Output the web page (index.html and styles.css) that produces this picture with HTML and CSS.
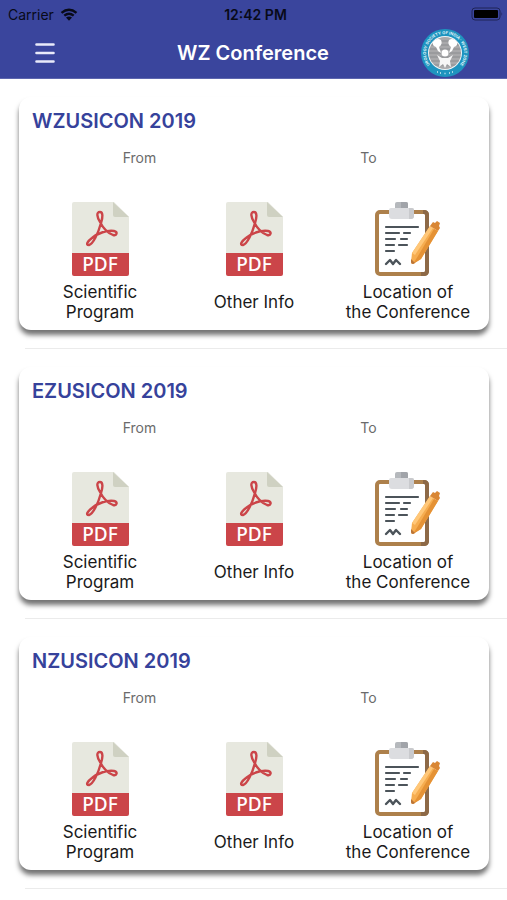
FILE: index.html
```html
<!DOCTYPE html>
<html lang="en">
<head>
<meta charset="utf-8">
<meta name="viewport" content="width=device-width, initial-scale=1">
<title>WZ Conference</title>
<link rel="stylesheet" href="styles.css">
</head>
<body>
<svg class="sprite" aria-hidden="true">
  <symbol id="pdf" viewBox="0 0 57 74">
    <path d="M2 0H42L57 15V60H0V2Q0 0 2 0Z" fill="#e7e8df"/>
    <path d="M41 0L57 15H43Q41 15 41 13Z" fill="#cfd1c2"/>
    <path d="M0 51H57V72Q57 74 55 74H2Q0 74 0 72Z" fill="#cb4549"/>
    <path d="M28 10C24 10 25 15 28 20C31 26 36 31 41 33C45 34 46 30 42 29C35 28 26 31 20 36C16 39 13 43 17 43C21 42 26 32 29 21C31 15 31 10 28 10Z" fill="none" stroke="#cb4549" stroke-width="2.4" stroke-linejoin="round"/>
  </symbol>
  <symbol id="clipboard" viewBox="0 0 66 74">
    <rect x="2" y="10" width="50" height="62" rx="3" fill="#fff" stroke="#ad804b" stroke-width="4"/>
    <path d="M48 10H49Q52 10 52 13V69Q52 72 49 72H46" fill="none" stroke="#8d6947" stroke-width="4"/>
    <path d="M20 6V2Q20 0 22 0H31Q33 0 33 2V6Z" fill="#b5b8bc"/>
    <path d="M26 0H31Q33 0 33 2V6H26Z" fill="#a1a4a9"/>
    <path d="M16 6H37Q39 6 39 8V14Q39 17 36 17H17Q14 17 14 14V8Q14 6 16 6Z" fill="#dcdde0"/>
    <path d="M34 6H37Q39 6 39 8V14Q39 17 36 17H34Z" fill="#c9cacd"/>
    <path d="M11 25H43M11 31H24M29 31H35M11 37H20M26 37H32M11 43H19M24 43H32M11 49H19" fill="none" stroke="#4c545a" stroke-width="2.2" stroke-linecap="round"/>
    <path d="M11 62L15 58L18 62L21 58L25 62" fill="none" stroke="#4c545a" stroke-width="2.4" stroke-linecap="round" stroke-linejoin="round"/>
    <path d="M37 51L55 24L63 29L46 57L38 62Q36 62 36 60Z" fill="#f6ad50"/>
    <path d="M59 27L63 29L46 57L38 62L43 54Z" fill="#e59235"/>
    <path d="M37 51L55 24L58 26L40 53Z" fill="#ffc779"/>
    <path d="M36 57L40 61L38 62Q36 62 36 60Z" fill="#ba7436"/>
    <path d="M55 24L58 20L60 21L62 19L65 21L64 24L65 26L63 29Z" fill="#d98633"/>
  </symbol>
</svg>

<header class="header">
  <div class="status">
    <div class="carrier">
      <span>Carrier</span>
      <svg class="wifi" viewBox="0 0 18 13" aria-hidden="true">
        <path d="M1.500 4.800Q9-1.500 16.500 4.800M4.300 7.600Q9 3.700 13.700 7.600" fill="none" stroke="currentColor" stroke-width="2.400"/>
        <path d="M6 9.600Q9 7.500 12 9.600L9 12.800Z" fill="currentColor"/>
      </svg>
    </div>
    <time class="clock">12:42 PM</time>
    <svg class="battery" viewBox="0 0 32 14" aria-hidden="true">
      <rect x="1" y="1" width="28" height="12" rx="3" fill="none" stroke="#1f2457"/>
      <rect x="3" y="3" width="24" height="8" rx="1" fill="#000"/>
      <path d="M30.500 5Q32 7 30.500 9Z" fill="#1f2457"/>
    </svg>
  </div>
  <div class="navbar">
    <button class="menu" type="button" aria-label="Menu">
      <svg viewBox="0 0 20 20" aria-hidden="true"><path d="M1.500 1.500H18.500M1.500 10H18.500M1.500 18.500H18.500" stroke="#e9eafa" stroke-width="2.600" stroke-linecap="round"/></svg>
    </button>
    <h1 class="heading">WZ Conference</h1>
    <svg class="logo" viewBox="0 0 48 48" role="img" aria-label="Society emblem">
      <defs>
        <path id="ring" d="M13.100 39.600A19 19 0 1 1 34.900 39.600"/>
        <clipPath id="disc"><circle cx="24" cy="24" r="16"/></clipPath>
      </defs>
      <circle cx="24" cy="24" r="24" fill="#1e94bf"/>
      <circle cx="24" cy="24" r="17" fill="#f2f5f6"/>
      <circle cx="24" cy="24" r="16" fill="#a9a9ab"/>
      <path clip-path="url(#disc)" d="M8 12H40M8 16H40M8 20H40M8 24H40M8 28H40M8 32H40M8 36H40" stroke="#8b8d90"/>
      <path d="M12 13Q16 8 20 11Q22 15 18 18L20 24L17 22L15 18Q11 17 12 13ZM36 13Q32 8 28 11Q26 15 30 18L28 24L31 22L33 18Q37 17 36 13Z" fill="#fff"/>
      <circle cx="24" cy="24" r="3.500" fill="#fff"/>
      <path d="M16 26L21 29H27L32 26L29 32L30 38L26 35L24 39L22 35L18 38L19 32Z" fill="#f6f6f6"/>
      <text class="logo-text"><textPath href="#ring" startOffset="50%" text-anchor="middle">UROLOGY SOCIETY OF INDIA · WEST ZONE</textPath></text>
      <path d="M16 43H17M19 44H20M23.500 44.500H24.500M28 44H29M31 43H32" stroke="#d5edf5" stroke-width="1.600"/>
    </svg>
  </div>
</header>

<main>
  <ul class="list">
    <li class="row">
      <article class="card">
        <h2 class="title">WZUSICON 2019</h2>
        <div class="dates"><span>From</span><span>To</span></div>
        <div class="actions">
          <button class="action" type="button"><svg class="icon-pdf" viewBox="0 0 57 74"><use href="#pdf"/><text class="pdf-text" x="28" y="69">PDF</text></svg><span class="label">Scientific<br>Program</span></button>
          <button class="action" type="button"><svg class="icon-pdf" viewBox="0 0 57 74"><use href="#pdf"/><text class="pdf-text" x="28" y="69">PDF</text></svg><span class="label">Other Info</span></button>
          <button class="action" type="button"><svg class="icon-clip" viewBox="0 0 66 74"><use href="#clipboard"/></svg><span class="label">Location of<br>the Conference</span></button>
        </div>
      </article>
    </li>
    <li class="row">
      <article class="card">
        <h2 class="title">EZUSICON 2019</h2>
        <div class="dates"><span>From</span><span>To</span></div>
        <div class="actions">
          <button class="action" type="button"><svg class="icon-pdf" viewBox="0 0 57 74"><use href="#pdf"/><text class="pdf-text" x="28" y="69">PDF</text></svg><span class="label">Scientific<br>Program</span></button>
          <button class="action" type="button"><svg class="icon-pdf" viewBox="0 0 57 74"><use href="#pdf"/><text class="pdf-text" x="28" y="69">PDF</text></svg><span class="label">Other Info</span></button>
          <button class="action" type="button"><svg class="icon-clip" viewBox="0 0 66 74"><use href="#clipboard"/></svg><span class="label">Location of<br>the Conference</span></button>
        </div>
      </article>
    </li>
    <li class="row">
      <article class="card">
        <h2 class="title">NZUSICON 2019</h2>
        <div class="dates"><span>From</span><span>To</span></div>
        <div class="actions">
          <button class="action" type="button"><svg class="icon-pdf" viewBox="0 0 57 74"><use href="#pdf"/><text class="pdf-text" x="28" y="69">PDF</text></svg><span class="label">Scientific<br>Program</span></button>
          <button class="action" type="button"><svg class="icon-pdf" viewBox="0 0 57 74"><use href="#pdf"/><text class="pdf-text" x="28" y="69">PDF</text></svg><span class="label">Other Info</span></button>
          <button class="action" type="button"><svg class="icon-clip" viewBox="0 0 66 74"><use href="#clipboard"/></svg><span class="label">Location of<br>the Conference</span></button>
        </div>
      </article>
    </li>
  </ul>
</main>
</body>
</html>
```
FILE: styles.css
```css
* {
  box-sizing: border-box;
}

body {
  margin: 0;
  background: #fff;
  color: #1a1a1a;
  font-family: Inter, "Liberation Sans", sans-serif;
}

button {
  margin: 0;
  padding: 0;
  border: 0;
  background: none;
  color: inherit;
  font: inherit;
}

svg {
  display: block;
}

.sprite {
  display: none;
}

.header {
  background: #3a459d;
  border-bottom: 1px solid #5d66ae;
}

.status {
  display: grid;
  grid-template-columns: 1fr auto 1fr;
  align-items: center;
  height: 28px;
  padding: 0 4px 0 8px;
  color: #080a18;
  font-size: 14px;
}

.carrier {
  display: flex;
  align-items: center;
  gap: 6px;
}

.wifi {
  width: 18px;
  height: 13px;
}

.clock {
  font-weight: 600;
}

.battery {
  width: 32px;
  height: 14px;
  justify-self: end;
}

.navbar {
  display: grid;
  grid-template-columns: 1fr auto 1fr;
  align-items: center;
  height: 50px;
  padding: 0 38px 0 35px;
}

.menu {
  width: 20px;
  height: 20px;
}

.heading {
  margin: 0;
  padding-left: 2px;
  color: #fff;
  font-size: 20px;
  font-weight: 600;
}

.logo {
  width: 48px;
  height: 48px;
  justify-self: end;
}

.logo-text {
  fill: #e2f4fa;
  font-size: 4px;
  font-weight: 700;
}

.list {
  margin: 0;
  padding: 0;
  list-style: none;
}

.row {
  padding: 18px 18px 18px 19px;
}

.row::after {
  content: "";
  display: block;
  height: 1px;
  margin: 18px -18px -18px 6px;
  background: #ebebeb;
}

.card {
  padding: 14px 4px 8px;
  border-radius: 12px;
  background: #fff;
  box-shadow: 0 5px 5px rgba(0, 0, 0, 0.55);
}

.title {
  margin: 0 9px;
  color: #36429b;
  font-size: 20px;
  font-weight: 600;
  line-height: 20px;
}

.dates {
  display: grid;
  grid-template-columns: 1fr 1fr;
  margin: 17px 2px 34px;
  color: #6b6b6b;
  font-size: 14px;
  line-height: 20px;
  text-align: center;
}

.actions {
  display: grid;
  grid-template-columns: repeat(3, 1fr);
}

.action {
  display: flex;
  flex-direction: column;
  align-items: center;
  gap: 6px;
}

.icon-pdf {
  width: 57px;
  height: 74px;
}

.icon-clip {
  width: 66px;
  height: 74px;
}

.pdf-text {
  fill: #fff;
  font-family: "Noto Sans", sans-serif;
  font-size: 19px;
  font-weight: 500;
  text-anchor: middle;
}

.label {
  display: grid;
  align-items: center;
  min-height: 40px;
  font-size: 17px;
  line-height: 20px;
}
```
